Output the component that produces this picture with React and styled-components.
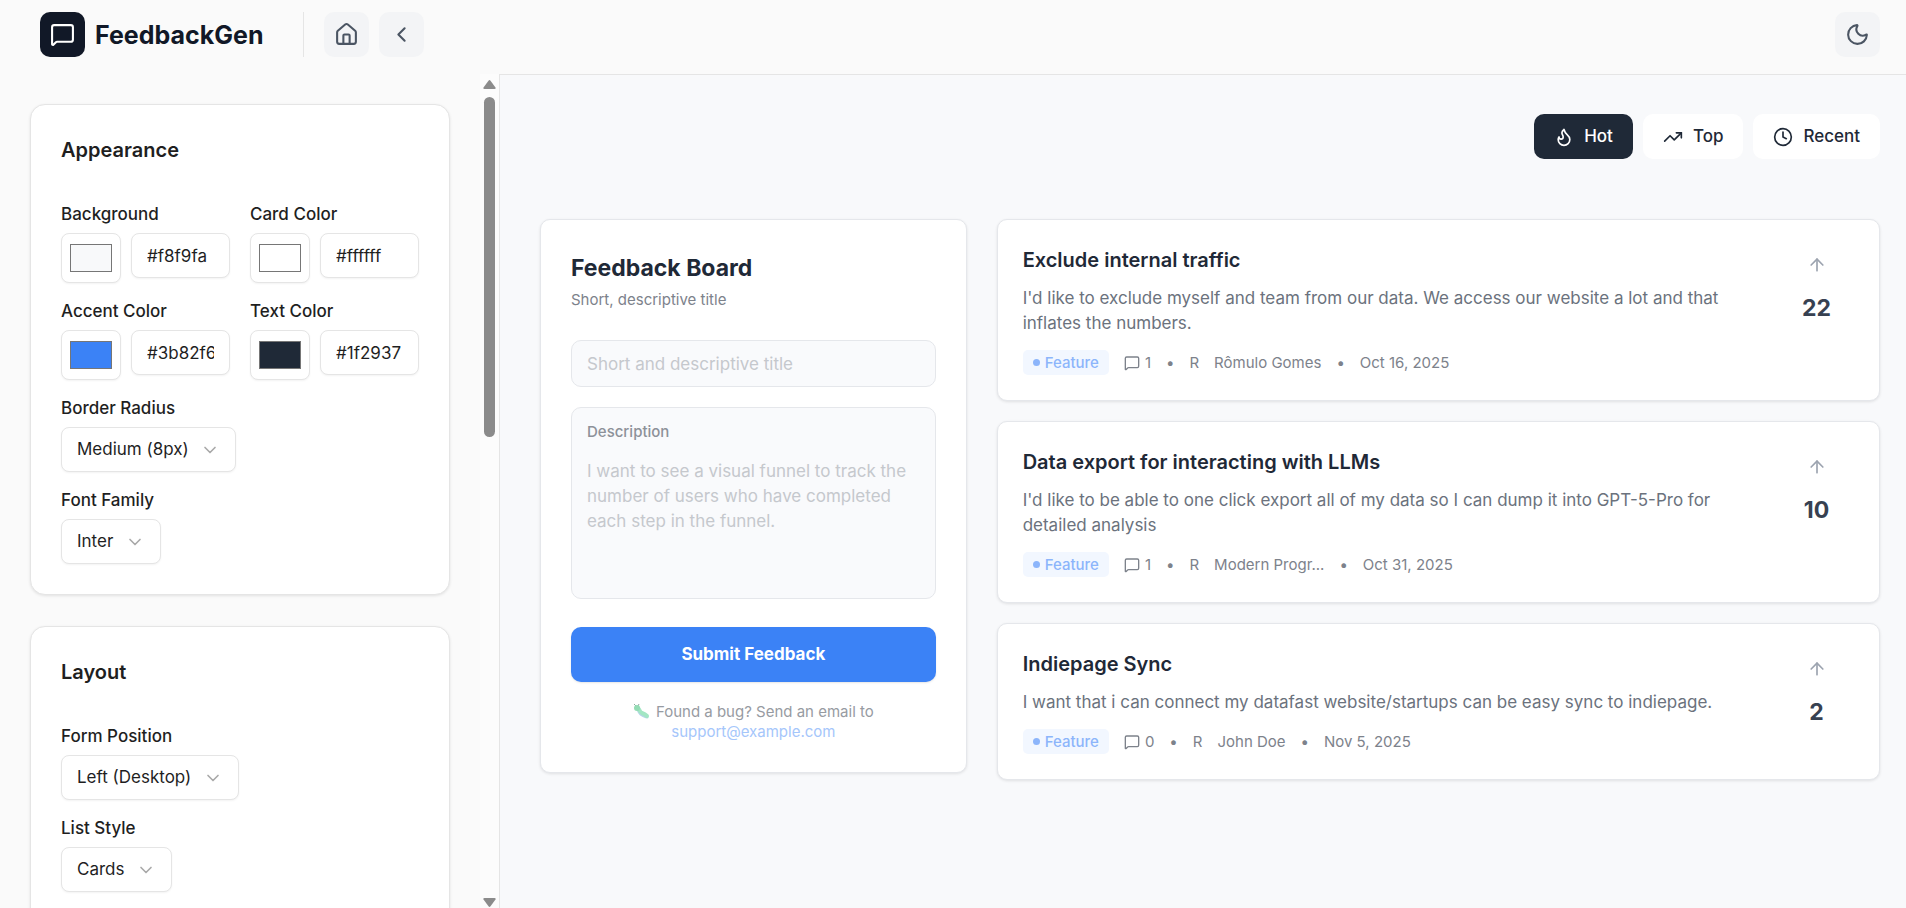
import React, { useState } from "react";
import styled, { createGlobalStyle, css } from "styled-components";
import {
  ArrowUp,
  ChevronDown,
  ChevronLeft,
  Clock,
  Flame,
  House,
  MessageSquare,
  Moon,
  TrendingUp,
} from "lucide-react";

const GlobalStyle = createGlobalStyle`
  *, *::before, *::after { box-sizing: border-box; }
  body {
    margin: 0;
    background: #fafafa;
    color: #1f1f1f;
    font-family: Inter, "Liberation Sans", sans-serif;
    font-size: 17px;
    line-height: 25px;
  }
  h1, h2, h3, p { margin: 0; }
  button, input, textarea, select { font: inherit; color: inherit; }
  button { cursor: pointer; }
`;

const Page = styled.div`
  display: flex;
  flex-direction: column;
  height: 100vh;
  overflow: hidden;
`;

const Header = styled.header`
  display: flex;
  flex: none;
  align-items: center;
  justify-content: space-between;
  padding: 12px 26px 17px 40px;
`;

const HeaderGroup = styled.div`
  display: flex;
  align-items: center;
  gap: 10px;
`;

const Brand = styled.a`
  display: flex;
  align-items: center;
  gap: 10px;
  color: #111827;
  font-size: 25px;
  font-weight: 700;
  line-height: 30px;
  text-decoration: none;
`;

const BrandMark = styled.span`
  display: flex;
  align-items: center;
  justify-content: center;
  width: 45px;
  height: 45px;
  border-radius: 10px;
  background: #111827;
  color: #ffffff;
`;

const Divider = styled.span`
  width: 1px;
  height: 45px;
  margin: 0 10px 0 30px;
  background: #e5e5e5;
`;

const IconButton = styled.button`
  display: flex;
  align-items: center;
  justify-content: center;
  width: 45px;
  height: 45px;
  padding: 0;
  border: 0;
  border-radius: 10px;
  background: #f3f4f6;
  color: #4b5563;
`;

const Body = styled.div`
  display: flex;
  flex: 1;
  min-height: 0;
`;

const Sidebar = styled.aside`
  display: flex;
  flex: none;
  width: 499px;
`;

const Panels = styled.div`
  display: flex;
  flex: 1;
  flex-direction: column;
  gap: 31px;
  min-width: 0;
  padding: 30px;
  overflow: hidden;
`;

const ScrollRail = styled.div`
  display: flex;
  flex: none;
  flex-direction: column;
  align-items: center;
  width: 19px;
  padding: 6px 0 1px;
  background: #fcfcfc;
  color: #8b8b8b;
`;

const ScrollThumb = styled.div`
  width: 11px;
  height: 340px;
  margin: 8px 0 auto;
  border-radius: 6px;
  background: currentColor;
`;

const Panel = styled.section`
  flex: none;
  padding: 30px;
  border: 1px solid #e5e5e5;
  border-radius: 15px;
  background: #ffffff;
  box-shadow: 0 1px 3px rgba(0, 0, 0, 0.1);
`;

const PanelTitle = styled.h2`
  margin-bottom: 39px;
  font-size: 20px;
  font-weight: 600;
  line-height: 30px;
`;

const Fields = styled.div`
  display: flex;
  flex-direction: column;
  gap: 18px;
`;

const ColorFields = styled.div`
  display: grid;
  grid-template-columns: repeat(2, minmax(0, 1fr));
  gap: 18px 20px;
`;

const FieldLabel = styled.label`
  display: block;
  margin-bottom: 9px;
  font-weight: 500;
  line-height: 20px;
`;

const ColorRow = styled.div`
  display: flex;
  align-items: flex-start;
  gap: 10px;
`;

const controlBox = css`
  border: 1px solid #e5e5e5;
  border-radius: 8px;
  background: #ffffff;
  box-shadow: 0 1px 2px rgba(0, 0, 0, 0.05);
`;

const Swatch = styled.input`
  ${controlBox}
  flex: none;
  width: 60px;
  height: 50px;
  padding: 10px 8px;
  &::-webkit-color-swatch-wrapper { padding: 0; }
  &::-webkit-color-swatch { border: 1px solid #767676; border-radius: 0; }
`;

const HexInput = styled.input`
  ${controlBox}
  flex: 1;
  min-width: 0;
  height: 45px;
  padding: 0 15px;
`;

const SelectBox = styled.span`
  position: relative;
  display: inline-flex;
  align-items: center;
  vertical-align: top;
  svg {
    position: absolute;
    right: 16px;
    color: #a9a9a9;
    pointer-events: none;
  }
`;

const Select = styled.select`
  ${controlBox}
  appearance: none;
  height: 45px;
  padding: 0 46px 0 15px;
`;

const Preview = styled.main`
  display: flex;
  flex: 1;
  flex-direction: column;
  gap: 60px;
  min-width: 0;
  padding: 39px 26px 39px 40px;
  border-top: 1px solid #e5e5e5;
  border-left: 1px solid #e5e5e5;
  background: #f8f9fb;
  color: #1f2937;
`;

const Filters = styled.div`
  display: flex;
  justify-content: flex-end;
  gap: 10px;
`;

const FilterButton = styled.button`
  display: flex;
  align-items: center;
  gap: 10px;
  height: 45px;
  padding: 0 20px;
  border: 0;
  border-radius: 10px;
  background: ${(p) => (p.$active ? "#1f2937" : "#ffffff")};
  color: ${(p) => (p.$active ? "#ffffff" : "#1f2937")};
  font-weight: 500;
`;

const Board = styled.div`
  display: grid;
  grid-template-columns: repeat(3, minmax(0, 1fr));
  align-items: start;
  gap: 30px;
`;

const card = css`
  border: 1px solid #e5e7eb;
  border-radius: 10px;
  background: #ffffff;
  box-shadow: 0 1px 3px rgba(0, 0, 0, 0.1);
`;

const FormCard = styled.form`
  ${card}
  display: flex;
  flex-direction: column;
  padding: 30px;
`;

const FormTitle = styled.h1`
  margin: 4px 0 8px;
  font-size: 23px;
  font-weight: 700;
  line-height: 28px;
`;

const FormHint = styled.p`
  margin-bottom: 30px;
  color: #7d828b;
  font-size: 15px;
  line-height: 20px;
`;

const inputBox = css`
  border: 1px solid #e5e7eb;
  border-radius: 10px;
  background: #f9fafc;
`;

const TitleInput = styled.input`
  ${inputBox}
  width: 100%;
  height: 47px;
  margin-bottom: 20px;
  padding: 0 15px;
  &::placeholder { color: #c5c8cd; opacity: 1; }
`;

const DescriptionBox = styled.div`
  ${inputBox}
  display: flex;
  flex-direction: column;
  gap: 17px;
  height: 192px;
  margin-bottom: 28px;
  padding: 14px 15px 15px;
`;

const DescriptionLabel = styled.label`
  color: #8d9199;
  font-size: 15px;
  font-weight: 500;
  line-height: 20px;
`;

const DescriptionInput = styled.textarea`
  flex: 1;
  width: 100%;
  padding: 0;
  border: 0;
  background: transparent;
  resize: none;
  overflow: hidden;
  &::placeholder { color: #c5c8cd; opacity: 1; }
`;

const SubmitButton = styled.button`
  height: 55px;
  margin-bottom: 20px;
  border: 0;
  border-radius: 10px;
  background: #3b82f6;
  color: #ffffff;
  font-weight: 700;
  box-shadow: 0 1px 2px rgba(0, 0, 0, 0.1);
`;

const BugNote = styled.p`
  color: #979ba2;
  font-size: 15px;
  line-height: 20px;
  text-align: center;
  a {
    display: block;
    color: #a5c6fb;
    text-decoration: none;
  }
  svg {
    margin-right: 6px;
    vertical-align: -2px;
  }
`;

const List = styled.div`
  display: flex;
  grid-column: span 2;
  flex-direction: column;
  gap: 20px;
`;

const Item = styled.article`
  ${card}
  display: flex;
  gap: 20px;
  padding: 25px;
`;

const ItemBody = styled.div`
  flex: 1;
  min-width: 0;
`;

const ItemTitle = styled.h3`
  font-size: 20px;
  font-weight: 600;
  line-height: 30px;
`;

const ItemText = styled.p`
  margin: 11px 0 14px;
  color: #6b727d;
`;

const Meta = styled.div`
  display: flex;
  align-items: center;
  gap: 15px;
  color: #7d828b;
  font-size: 15px;
`;

const Tag = styled.span`
  display: flex;
  align-items: center;
  gap: 5px;
  padding: 0 10px;
  border-radius: 5px;
  background: #f2f7ff;
  color: #8cb5fb;
  font-weight: 500;
  &::before {
    content: "";
    width: 7px;
    height: 7px;
    border-radius: 50%;
    background: currentColor;
  }
`;

const Comments = styled.span`
  display: flex;
  align-items: center;
  gap: 5px;
`;

const Votes = styled.div`
  display: flex;
  flex: none;
  flex-direction: column;
  align-items: center;
  gap: 8px;
  width: 75px;
  color: #374151;
  font-size: 23px;
  font-weight: 700;
  line-height: 30px;
`;

const VoteButton = styled.button`
  display: flex;
  padding: 10px;
  border: 0;
  background: transparent;
  color: #9ca3af;
`;

const COLORS = [
  { id: "background", label: "Background", value: "#f8f9fa" },
  { id: "card", label: "Card Color", value: "#ffffff" },
  { id: "accent", label: "Accent Color", value: "#3b82f6" },
  { id: "text", label: "Text Color", value: "#1f2937" },
];

const FILTERS = [
  { name: "Hot", Icon: Flame },
  { name: "Top", Icon: TrendingUp },
  { name: "Recent", Icon: Clock },
];

const ITEMS = [
  {
    title: "Exclude internal traffic",
    text: "I'd like to exclude myself and team from our data. We access our website a lot and that inflates the numbers.",
    comments: 1,
    author: "Rômulo Gomes",
    date: "Oct 16, 2025",
    votes: 22,
  },
  {
    title: "Data export for interacting with LLMs",
    text: "I'd like to be able to one click export all of my data so I can dump it into GPT-5-Pro for detailed analysis",
    comments: 1,
    author: "Modern Progr...",
    date: "Oct 31, 2025",
    votes: 10,
  },
  {
    title: "Indiepage Sync",
    text: "I want that i can connect my datafast website/startups can be easy sync to indiepage.",
    comments: 0,
    author: "John Doe",
    date: "Nov 5, 2025",
    votes: 2,
  },
];

function ColorField({ id, label, value }) {
  const [color, setColor] = useState(value);
  const update = (event) => setColor(event.target.value);
  return (
    <div>
      <FieldLabel htmlFor={id}>{label}</FieldLabel>
      <ColorRow>
        <Swatch type="color" aria-label={`${label} picker`} value={color} onChange={update} />
        <HexInput id={id} type="text" value={color} onChange={update} />
      </ColorRow>
    </div>
  );
}

function SelectField({ id, label, option }) {
  return (
    <div>
      <FieldLabel htmlFor={id}>{label}</FieldLabel>
      <SelectBox>
        <Select id={id}>
          <option>{option}</option>
        </Select>
        <ChevronDown size={20} aria-hidden="true" />
      </SelectBox>
    </div>
  );
}

function Caterpillar() {
  return (
    <svg width="17" height="16" viewBox="0 0 17 16" fill="none" aria-hidden="true">
      <path d="M3 3 1 1M5 3 6 1" stroke="#8fa8a0" />
      <path d="M5 6c1 4 2 5 4 6s3 2 5 2" stroke="#b5d4e8" strokeWidth="3" strokeLinecap="round" />
      <path d="M4 5c3 0 2 4 5 5s3 1 5 3" stroke="#a3e6c4" strokeWidth="4" strokeLinecap="round" />
      <circle cx="4" cy="5" r="3" fill="#93dcb4" />
    </svg>
  );
}

function Feedback({ title, text, comments, author, date, votes }) {
  return (
    <Item>
      <ItemBody>
        <ItemTitle>{title}</ItemTitle>
        <ItemText>{text}</ItemText>
        <Meta>
          <Tag>Feature</Tag>
          <Comments>
            <MessageSquare size={16} aria-hidden="true" />
            {comments}
          </Comments>
          <span>•</span>
          <span>R</span>
          <span>{author}</span>
          <span>•</span>
          <time>{date}</time>
        </Meta>
      </ItemBody>
      <Votes>
        <VoteButton type="button" aria-label="Upvote">
          <ArrowUp size={20} />
        </VoteButton>
        {votes}
      </Votes>
    </Item>
  );
}

export default function App() {
  const [filter, setFilter] = useState("Hot");
  return (
    <Page>
      <GlobalStyle />
      <Header>
        <HeaderGroup>
          <Brand href="#">
            <BrandMark>
              <MessageSquare size={25} aria-hidden="true" />
            </BrandMark>
            FeedbackGen
          </Brand>
          <Divider />
          <IconButton type="button" aria-label="Home">
            <House size={25} />
          </IconButton>
          <IconButton type="button" aria-label="Back">
            <ChevronLeft size={25} />
          </IconButton>
        </HeaderGroup>
        <IconButton type="button" aria-label="Dark mode">
          <Moon size={25} />
        </IconButton>
      </Header>
      <Body>
        <Sidebar>
          <Panels>
            <Panel>
              <PanelTitle>Appearance</PanelTitle>
              <Fields>
                <ColorFields>
                  {COLORS.map((c) => (
                    <ColorField key={c.id} {...c} />
                  ))}
                </ColorFields>
                <SelectField id="radius" label="Border Radius" option="Medium (8px)" />
                <SelectField id="font" label="Font Family" option="Inter" />
              </Fields>
            </Panel>
            <Panel>
              <PanelTitle>Layout</PanelTitle>
              <Fields>
                <SelectField id="position" label="Form Position" option="Left (Desktop)" />
                <SelectField id="list" label="List Style" option="Cards" />
              </Fields>
            </Panel>
          </Panels>
          <ScrollRail aria-hidden="true">
            <svg width="13" height="9" viewBox="0 0 13 9" fill="currentColor">
              <path d="M5.500.7a1.300 1.300 0 0 1 2 0l5 6.800q.6 1.500-1 1.500h-10q-1.600 0-1-1.500z" />
            </svg>
            <ScrollThumb />
            <svg width="13" height="9" viewBox="0 0 13 9" fill="currentColor">
              <path d="M5.500 8.300a1.300 1.300 0 0 0 2 0l5-6.800q.6-1.500-1-1.500h-10q-1.600 0-1 1.500z" />
            </svg>
          </ScrollRail>
        </Sidebar>
        <Preview>
          <Filters>
            {FILTERS.map(({ name, Icon }) => (
              <FilterButton
                key={name}
                type="button"
                $active={name === filter}
                aria-pressed={name === filter}
                onClick={() => setFilter(name)}
              >
                <Icon size={20} aria-hidden="true" />
                {name}
              </FilterButton>
            ))}
          </Filters>
          <Board>
            <FormCard onSubmit={(event) => event.preventDefault()}>
              <FormTitle>Feedback Board</FormTitle>
              <FormHint>Short, descriptive title</FormHint>
              <TitleInput type="text" aria-label="Title" placeholder="Short and descriptive title" />
              <DescriptionBox>
                <DescriptionLabel htmlFor="description">Description</DescriptionLabel>
                <DescriptionInput
                  id="description"
                  placeholder="I want to see a visual funnel to track the number of users who have completed each step in the funnel."
                />
              </DescriptionBox>
              <SubmitButton type="submit">Submit Feedback</SubmitButton>
              <BugNote>
                <Caterpillar />
                Found a bug? Send an email to
                <a href="mailto:support@example.com">support@example.com</a>
              </BugNote>
            </FormCard>
            <List>
              {ITEMS.map((item) => (
                <Feedback key={item.title} {...item} />
              ))}
            </List>
          </Board>
        </Preview>
      </Body>
    </Page>
  );
}
